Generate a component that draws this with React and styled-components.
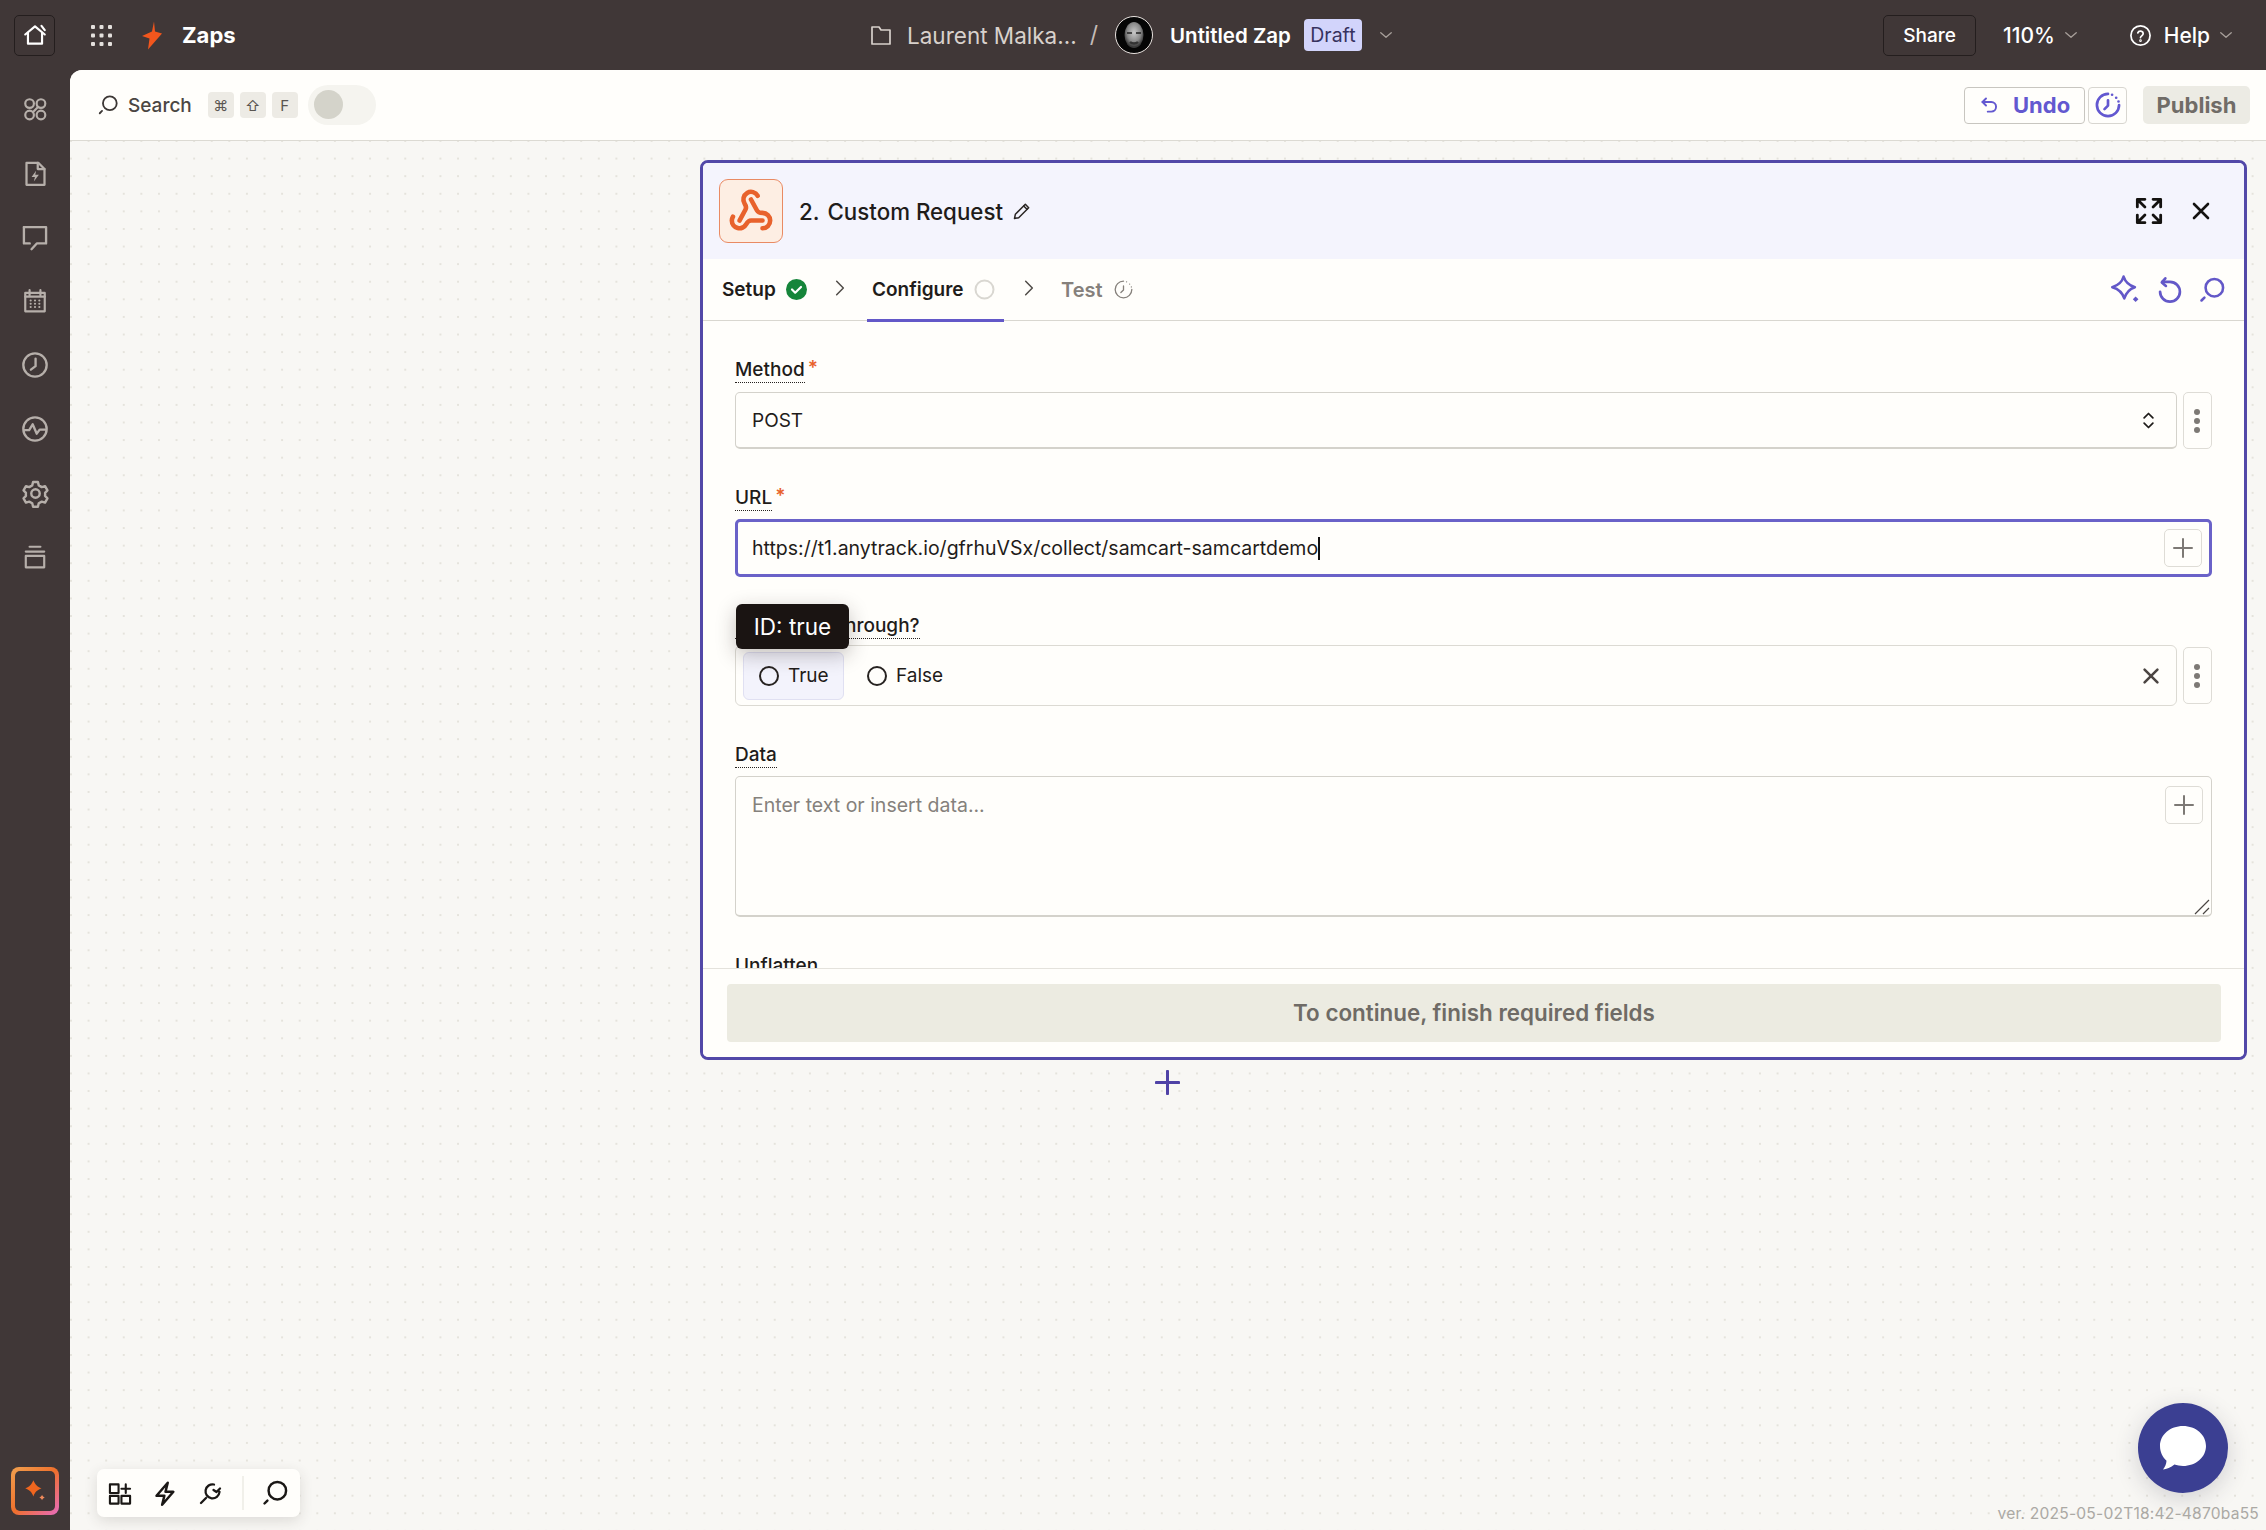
import React from "react";
import styled, { createGlobalStyle } from "styled-components";
import { Webhook } from "lucide-react";

const Global = createGlobalStyle`
  html, body { margin: 0; padding: 0; background: #403737; }
  body { font-family: Inter, "Liberation Sans", sans-serif; color: #1f1c1a; -webkit-font-smoothing: antialiased; }
  * { box-sizing: border-box; }
`;

const Page = styled.div`
  width: 2266px; height: 1530px; overflow: hidden;
  display: grid; grid-template-columns: 70px 1fr; grid-template-rows: 70px 1fr;
  background: #403737;
`;

/* ---------- top bar ---------- */
const TopBar = styled.header`
  grid-column: 1 / 3; display: flex; align-items: center; padding: 0 0 0 14px;
`;
const HomeButton = styled.div`
  width: 41px; height: 41px; border: 1.5px solid #241e1e; border-radius: 5px;
  display: flex; align-items: center; justify-content: center; color: #fff;
`;
const LeftGroup = styled.div`
  display: flex; align-items: center; width: 855px;
`;
const GridSlot = styled.div`
  margin-left: 36px; display: flex; color: #e4e0dd;
`;
const BoltSlot = styled.div`
  margin-left: 30px; display: flex;
`;
const Product = styled.span`
  margin-left: 20px; font-size: 22px; font-weight: 700; color: #fff;
`;
const CenterGroup = styled.div`
  display: flex; align-items: center; flex: 1; color: #d8d1cc;
`;
const FolderName = styled.span`
  margin-left: 14px; font-size: 22.5px; color: #d8d1cc; white-space: nowrap;
`;
const Slash = styled.span`
  margin-left: 13px; font-size: 23px; color: #c4bcb7;
`;
const Avatar = styled.div`
  margin-left: 17px; width: 38px; height: 38px; flex: none; display: flex;
`;
const ZapName = styled.span`
  margin-left: 17px; font-size: 20.5px; font-weight: 600; color: #fff; white-space: nowrap;
`;
const DraftBadge = styled.span`
  margin-left: 13px; width: 58px; height: 32px; border-radius: 4px; background: #d2d4fb;
  color: #37325e; font-size: 19.5px; font-weight: 400; display: flex; align-items: center; justify-content: center;
`;
const Chevron = styled.span`
  display: flex; color: ${p => p.$color || "#a69e99"}; margin-left: ${p => p.$ml || 0}px;
`;
const RightGroup = styled.div`
  display: flex; align-items: center; width: 383px; flex: none; color: #fff;
`;
const ShareButton = styled.div`
  width: 93px; height: 41px; border: 1.5px solid #241e1e; border-radius: 5px; font-size: 19px; font-weight: 500;
  display: flex; align-items: center; justify-content: center;
`;
const ZoomValue = styled.span`
  margin-left: 27px; font-size: 21px; font-weight: 500;
`;
const HelpSlot = styled.span`
  margin-left: 49px; display: flex;
`;
const HelpText = styled.span`
  margin-left: 12px; font-size: 21px; font-weight: 500;
`;

/* ---------- side rail ---------- */
const Rail = styled.nav`
  display: flex; flex-direction: column; align-items: center; padding-top: 21px;
  gap: 28px; color: #b6afaa; position: relative;
`;
const RailIcon = styled.div`
  width: 36px; height: 36px; display: flex; align-items: center; justify-content: center;
`;
const AiButton = styled.div`
  position: absolute; left: 11px; bottom: 15px; width: 48px; height: 48px; border-radius: 8px; padding: 4px;
  background: linear-gradient(135deg, #f0a14f 0%, #ee6f2c 50%, #e86cc0 100%);
  display: flex;
`;
const AiInner = styled.div`
  flex: 1; border-radius: 5px; background: #403737; display: flex; align-items: center; justify-content: center;
`;

/* ---------- canvas ---------- */
const Main = styled.main`
  display: flex; flex-direction: column; background: #f8f7f4; border-top-left-radius: 12px; overflow: hidden; position: relative;
`;
const Toolbar = styled.div`
  height: 71px; flex: none; background: #fffefb; border-bottom: 1.5px solid #dcdad3; display: flex; align-items: center;
  padding-left: 27px; color: #3c3735;
`;
const SearchLabel = styled.span`
  margin-left: 9px; font-size: 19px; font-weight: 500; color: #4b4643;
`;
const Keys = styled.div`
  display: flex; gap: 6px; margin-left: 16px;
`;
const Key = styled.kbd`
  width: 26px; height: 26px; border-radius: 4px; background: #edebe5; color: #5a5551;
  font-family: Inter, "DejaVu Sans", sans-serif; font-size: 15px; display: flex; align-items: center; justify-content: center;
`;
const Toggle = styled.div`
  margin-left: 10px; width: 68px; height: 40px; border-radius: 20px; background: #f5f4ef; padding: 5px 6px; display: flex;
`;
const ToggleKnob = styled.div`
  width: 29px; height: 29px; border-radius: 50%; background: #d4d3ca;
`;
const ToolbarActions = styled.div`
  margin-left: auto; display: flex; align-items: center; padding-right: 16px;
`;
const UndoButton = styled.div`
  width: 121px; height: 37px; border: 1.5px solid #c8c6c0; border-radius: 4px; display: flex; align-items: center;
  padding-left: 14px; gap: 13px; color: #6358d0; font-size: 22px; font-weight: 700; background: #fffefb;
`;
const TimerButton = styled.div`
  margin-left: 3px; width: 39px; height: 37px; border: 1.5px solid #d8d6d0; border-radius: 4px; display: flex;
  align-items: center; justify-content: center; color: #6358d0;
`;
const PublishButton = styled.div`
  margin-left: 16px; width: 107px; height: 38px; border-radius: 5px; background: #ecebe4; color: #706c67;
  font-size: 22px; font-weight: 700; display: flex; align-items: center; justify-content: center;
`;
const Canvas = styled.div`
  flex: 1; position: relative; padding: 19px 0 0 630px;
  background-color: #f8f7f4;
  background-image: radial-gradient(circle at 1px 1px, #e5e3dc 0 1px, transparent 1.5px);
  background-size: 17.6px 17.6px;
  background-position: 0 -1px;
`;

/* ---------- panel ---------- */
const Panel = styled.section`
  width: 1547px; height: 900px; border: 3px solid #5248a8; border-radius: 8px; background: #fffefb;
  display: flex; flex-direction: column; overflow: hidden;
`;
const PanelHeader = styled.div`
  height: 96px; flex: none; background: #f4f4fd; display: flex; align-items: center; padding: 0 31px 0 16px;
`;
const AppIcon = styled.div`
  width: 64px; height: 64px; border: 1.5px solid #e98a63; border-radius: 9px; background: #fdeee3; color: #e8622c;
  display: flex; align-items: center; justify-content: center;
`;
const PanelTitle = styled.h2`
  margin: 0 0 0 16px; font-size: 22.3px; font-weight: 500; color: #1f1c1a; display: flex; gap: 8px; white-space: nowrap;
`;
const EditSlot = styled.span`
  margin-left: 9px; display: flex; color: #2a2624;
`;
const HeaderActions = styled.div`
  margin-left: auto; display: flex; align-items: center; gap: 26px; color: #141210;
`;
const Tabs = styled.div`
  height: 62px; flex: none; display: flex; align-items: stretch; border-bottom: 1.5px solid #d9d7d0; padding: 0 0 0 19px; font-size: 19px;
`;
const Tab = styled.div`
  position: relative; display: flex; align-items: center; gap: 10px; width: ${p => p.$w}px; flex: none;
  padding-left: ${p => p.$pl || 0}px; font-weight: 600; font-size: ${p => p.$muted ? 20 : 19}px; color: ${p => p.$muted ? "#85807b" : "#1f1c1a"};
  ${p => p.$active && `&::after { content: ""; position: absolute; left: 0; right: 0; bottom: -1.5px; height: 3px; background: #6358c8; }`}
`;
const TabChevron = styled.div`
  width: ${p => p.$w}px; flex: none; display: flex; align-items: center; padding-left: ${p => p.$pl || 0}px; color: #4f4b47; padding-bottom: 4px;
`;
const TabTools = styled.div`
  margin-left: auto; display: flex; align-items: center; gap: 14px; color: #6358c8; padding-right: 18px;
`;
const PanelBody = styled.div`
  flex: 1; min-height: 0; overflow: hidden; padding: 37px 32px 0; display: flex; flex-direction: column; gap: 37px;
`;
const Field = styled.div`
  display: flex; flex-direction: column; flex: none;
`;
const LabelRow = styled.div`
  display: flex; gap: 3px; height: 25px; margin-bottom: ${p => p.$mb ?? 9}px;
`;
const Label = styled.label`
  font-size: 19px; font-weight: 500; line-height: 24px; height: 25px; border-bottom: 1.5px dotted #26221f; color: #1f1c1a;
`;
const Required = styled.span`
  color: #e8622c; font-size: 19px; line-height: 20px; font-weight: 600;
`;
const Row = styled.div`
  display: flex; gap: 6px; align-items: ${p => p.$align || "stretch"};
`;
const Select = styled.div`
  flex: 1; height: 57px; border: 1.5px solid #d4d2cb; border-bottom-width: 2px; border-radius: 5px; display: flex; align-items: center; justify-content: space-between;
  padding: 0 17px 0 16px; font-size: 19px; color: #1f1c1a; background: #fffefb;
`;
const Kebab = styled.div`
  width: 29px; height: ${p => p.$h}px; flex: none; border: 1.5px solid #dedcd6; border-radius: 5px; display: flex; align-items: center; justify-content: center; color: #7d7975; padding-right: 2px;
`;
const UrlInput = styled.div`
  height: 58px; border: 3px solid #6a62c8; border-radius: 5px; display: flex; align-items: center; padding: 0 7px 0 14px;
  font-size: 19.5px; justify-content: space-between; background: #fffefb;
`;
const UrlText = styled.span`
  display: flex; align-items: center; white-space: nowrap;
`;
const Caret = styled.i`
  display: inline-block; width: 1.5px; height: 23px; background: #111; margin-left: 0;
`;
const PlusButton = styled.div`
  width: 38px; height: 38px; flex: none; border: 1.5px solid #dedcd6; border-radius: 5px; display: flex; align-items: center; justify-content: center; color: #7d7975;
`;
const RadioBox = styled.div`
  flex: 1; height: 61px; border: 1.5px solid #dcdad3; border-radius: 6px; display: flex; align-items: center; padding: 0 14px 0 7px; font-size: 19px;
`;
const RadioOption = styled.div`
  height: 48px; width: ${p => p.$w}px; display: flex; align-items: center; gap: 9px; padding-left: 16px; border-radius: 6px;
  ${p => p.$hover && `background: #f3f3fc; border: 1.5px solid #e0e0f2; padding-left: 15px; margin-right: 7px;`}
`;
const RadioDot = styled.span`
  width: 20px; height: 20px; flex: none; border: 2px solid #272321; border-radius: 50%;
`;
const ClearSlot = styled.span`
  margin-left: auto; display: flex; color: #4b4542;
`;
const TextArea = styled.div`
  position: relative; height: 141px; border: 1.5px solid #d4d2cb; border-bottom-width: 2px; border-radius: 5px; display: flex; justify-content: space-between;
  padding: 9px 8px 0 16px; font-size: 19.5px; color: #85817c;
`;
const Placeholder = styled.span`
  line-height: 38px;
`;
const ResizeGrip = styled.span`
  position: absolute; right: 1px; bottom: 0; display: flex; color: #4a4643;
`;
const Tooltip = styled.div`
  position: absolute; left: 1px; top: -10px; width: 113px; height: 45px; border-radius: 6px; background: #1a1412; color: #fff;
  font-size: 22.5px; display: flex; align-items: center; justify-content: center; box-shadow: 0 6px 20px rgba(40,30,30,.28);
  z-index: 2;
`;
const TooltipAnchor = styled.div`
  position: relative;
`;
const PanelFooter = styled.div`
  flex: none; height: 89px; border-top: 1.5px solid #e4e2dc; padding: 15px 23px 0 24px; background: #fffefb;
`;
const ContinueButton = styled.div`
  height: 58px; border-radius: 4px; background: #ecebe1; color: #6f6b66; font-size: 22.4px; font-weight: 600;
  display: flex; align-items: center; justify-content: center; padding-bottom: 1px;
`;
const AddStep = styled.div`
  padding: 10px 0 0 455px; display: flex; color: #4f42a6;
`;

/* ---------- floaters ---------- */
const FloatBar = styled.div`
  position: absolute; left: 27px; bottom: 13px; width: 203px; height: 48px; border-radius: 7px; background: #fffefb;
  box-shadow: 0 4px 14px rgba(60,50,40,.14); display: flex; align-items: center; padding-left: 11px; color: #1a1715;
`;
const FloatItem = styled.div`
  width: ${p => p.$w || 45}px; height: 48px; display: flex; align-items: center; justify-content: center; flex: none;
`;
const FloatDivider = styled.div`
  width: 1.5px; height: 34px; background: #f1f0ea; margin: 0 9px 0 20px; flex: none;
`;
const ChatButton = styled.div`
  position: absolute; right: 38px; bottom: 37px; width: 90px; height: 90px; border-radius: 50%; background: #3b3f92;
  box-shadow: 0 6px 24px rgba(40,40,60,.18); display: flex; align-items: center; justify-content: center;
`;
const Version = styled.div`
  position: absolute; right: 7px; bottom: 7px; font-size: 15.6px; color: #aba9a4; letter-spacing: .2px; white-space: nowrap;
`;

/* ---------- icons ---------- */
const Ico = ({ s = 24, w = 2, children, fill = "none", vb = "0 0 24 24" }) => (
  <svg width={s} height={s} viewBox={vb} fill={fill} stroke={fill === "none" ? "currentColor" : "none"} strokeWidth={w} strokeLinecap="round" strokeLinejoin="round">
    {children}
  </svg>
);

const HomeIcon = () => <Ico s={26} w={2}><path d="M3 11.5 12 4l9 7.5" /><path d="M5.5 10v10h13V10" /><path d="M18 3.5l3 4" /></Ico>;
const AppsIcon = () => (
  <Ico s={21} fill="currentColor" vb="0 0 21 21">
    {[2, 10.5, 19].flatMap(y => [2, 10.5, 19].map(x => <rect key={`${x}-${y}`} x={x - 2} y={y - 2} width="4" height="4" rx="1" />))}
  </Ico>
);
const ZapBolt = () => <svg width="20" height="29" viewBox="0 0 20 28"><path d="M12 0 10 10 0 14.500l7.500 2.500L6 28 20 12 13 10Z" fill="#f2561d" /></svg>;
const ChevronDown = ({ s = 18 }) => <Ico s={s} w={1.8}><path d="M5 9l7 6 7-6" /></Ico>;
const FolderIcon = () => <Ico s={24} w={1.7}><path d="M3 4h7l2 3h9v14H3Z" /></Ico>;
const AvatarPic = () => (
  <svg width="38" height="38" viewBox="0 0 38 38">
    <defs>
      <radialGradient id="fc" cx="50%" cy="40%" r="55%"><stop offset="0" stopColor="#c9c9c9" /><stop offset=".65" stopColor="#8a8a8a" /><stop offset="1" stopColor="#3a3a3a" /></radialGradient>
    </defs>
    <circle cx="19" cy="19" r="18.5" fill="#050505" stroke="#e9e3e0" strokeWidth="1" />
    <ellipse cx="19" cy="19" rx="9.500" ry="13" fill="url(#fc)" />
    <path d="M12 17h5M21 17h5" stroke="#222" strokeWidth="1.600" />
    <path d="M15 26c2 2 6 2 8 0" stroke="#333" strokeWidth="2.400" fill="none" />
  </svg>
);
const HelpIcon = () => <Ico s={23} w={1.8}><circle cx="12" cy="12" r="10" /><path d="M9.2 9.3a2.9 2.9 0 0 1 5.6.9c0 1.9-2.8 2.3-2.8 3.9" /><circle cx="12" cy="17.4" r=".5" /></Ico>;
const SearchIcon = ({ s = 22, w = 2 }) => <Ico s={s} w={w}><circle cx="14" cy="10" r="7.5" /><path d="M3 21l2.5-2.5" /></Ico>;
const UndoArrow = () => <Ico s={21} w={2.2}><path d="M8 4 4 8l4 4" /><path d="M4 8h10a5.5 5.5 0 0 1 0 11h-4" /></Ico>;
const TimerIcon = ({ s = 28, w = 2.3 }) => (
  <Ico s={s} w={w}>
    <path d="M12 2.5A9.5 9.5 0 1 0 21.5 12" />
    <path d="M12 8v4.5l-3 3" />
    <path d="M15.5 3.2h.01M19 5.8h.01M21 9h.01" />
  </Ico>
);
const RailCircles = () => <Ico s={26} w={2}><circle cx="7" cy="7" r="4" /><circle cx="17.5" cy="7" r="4" /><circle cx="7" cy="17.5" r="4" /><circle cx="17.5" cy="17.5" r="4" /><path d="M15 10 10 15" /></Ico>;
const RailDoc = () => <Ico s={27} w={2}><path d="M4 2.5h10.5l5.5 5.5v14H4Z" /><path d="M14 2.5V8h6" /><path d="M12.5 9.5 8.5 15h3l-1 4 4.5-6h-3.2Z" fill="currentColor" stroke="none" /></Ico>;
const RailChat = () => <Ico s={28} w={2}><path d="M2.5 3.5h19v14h-8L9 22.5" /><path d="M7.5 17.5h-5v-14" /></Ico>;
const RailCal = () => (
  <Ico s={26} w={2}>
    <path d="M3 4.5h18v17H3Z" /><path d="M7 2v4.5M17 2v4.5M3 8h18" />
    <path d="M8 11.5h.01M12 11.5h.01M16 11.5h.01M8 14.5h.01M12 14.5h.01M16 14.5h.01M8 17.5h.01M12 17.5h.01M16 17.5h.01" />
  </Ico>
);
const RailClock = () => <Ico s={28} w={2}><circle cx="12" cy="12" r="10" /><path d="M12.5 6.5V13l-4 3" /></Ico>;
const RailPulse = () => <Ico s={28} w={2}><circle cx="12" cy="12" r="10" /><path d="M3 13h4l3-5 3.5 8 2.5-3.5h5" /></Ico>;
const RailGear = () => (
  <Ico s={29} w={2}>
    <circle cx="12" cy="12" r="3.5" />
    <path d="M10 2.5h4l.7 2.8 2.5 1.4 2.7-.8 2 3.5-2 2 .1 1.2-.1 1.4 2 2-2 3.5-2.7-.8-2.5 1.4-.7 2.8h-4l-.7-2.8-2.5-1.4-2.7.8-2-3.5 2-2-.1-1.4.1-1.2-2-2 2-3.5 2.7.8 2.5-1.4Z" />
  </Ico>
);
const RailStack = () => <Ico s={26} w={2}><path d="M7 2.5h10M3.5 7h17" /><path d="M3.5 11h17v10.5h-17Z" /></Ico>;
const SparkFill = () => (
  <svg width="26" height="26" viewBox="0 0 24 24">
    <path d="M10.500 2c1.600 4 3.500 6 7.500 7.500-4 1.600-5.900 3.500-7.500 7.500-1.600-4-3.500-5.900-7.500-7.500 4-1.500 5.900-3.500 7.500-7.500Z" fill="#f0661f" />
    <path d="M18.500 15.500c.5 1.300 1.300 2 2.500 2.500-1.200.5-2 1.300-2.500 2.500-.5-1.200-1.300-2-2.500-2.500 1.200-.5 2-1.200 2.500-2.500Z" fill="#ef8a5b" />
  </svg>
);
const Pencil = () => <Ico s={20} w={1.8}><path d="M3 21l1-5L16 4l4 4L8 20Z" /><path d="M14 6l4 4" /></Ico>;
const ExpandIcon = () => (
  <Ico s={28} w={2.4}>
    <path d="M2 8.500V2h6.500M2.500 2.500l6 6M15.500 2H22v6.500M21.500 2.500l-6 6M2 15.500V22h6.500M2.500 21.500l6-6M22 15.500V22h-6.500M21.500 21.500l-6-6" />
  </Ico>
);
const CloseIcon = ({ s = 24, w = 2.6 }) => <Ico s={s} w={w}><path d="M5 5l14 14M19 5 5 19" /></Ico>;
const CheckBadge = () => (
  <svg width="21" height="21" viewBox="0 0 21 21"><circle cx="10.500" cy="10.500" r="10.500" fill="#15853a" /><path d="M6 10.500l3.200 3.200L15 8" stroke="#fff" strokeWidth="2.200" fill="none" strokeLinecap="round" strokeLinejoin="round" /></svg>
);
const Ring = () => <svg width="21" height="21" viewBox="0 0 21 21"><circle cx="10.500" cy="10.500" r="9" fill="none" stroke="#d9d7d1" strokeWidth="2" /></svg>;
const ChevronRight = () => <Ico s={20} w={1.8}><path d="M8 4l8 8-8 8" /></Ico>;
const SparkOutline = () => (
  <Ico s={34} w={1.8} vb="0 0 24 24">
    <path d="M11 2.500c1.200 3.700 3.800 6.200 8 7.500-4 1.300-6.200 3.500-7.500 8-1.300-4.500-4-6.700-8.500-8 4.500-1.300 7-3.800 8-7.500Z" />
    <path d="M19.500 16.500l2 2-2 2-2-2Z" fill="currentColor" stroke="none" />
  </Ico>
);
const RedoIcon = () => <Ico s={28} w={2.300}><path d="M8 2 5 5.500 8.500 8.500" /><path d="M5.500 5.500H12a8.500 8.500 0 1 1-8.500 8.500" transform="translate(0 -.500)" /></Ico>;
const UpDown = () => <Ico s={21} w={2}><path d="M7 9l5-5 5 5M7 15l5 5 5-5" /></Ico>;
const Dots = () => (
  <svg width="6" height="24" viewBox="0 0 6 24" fill="currentColor"><circle cx="3" cy="3" r="3" /><circle cx="3" cy="12" r="3" /><circle cx="3" cy="21" r="3" /></svg>
);
const Plus = ({ s = 20, w = 2 }) => <Ico s={s} w={w} vb="0 0 20 20"><path d="M10 1v18M1 10h18" /></Ico>;
const Grip = () => (
  <svg width="16" height="16" viewBox="0 0 16 16" stroke="currentColor" strokeWidth="1.200"><path d="M1 15 15 1M9 15l6-6" /></svg>
);
const AddWidget = () => (
  <Ico s={25} w={2.200} vb="0 0 25 25">
    <path d="M2 3h9v9H2ZM2 15h9v8H2ZM14 15h9v8h-9ZM14 7.500h9M18.500 3v9" />
  </Ico>
);
const BoltOutline = () => <Ico s={27} w={2.200}><path d="M14 2.500 4 14h7l-2 8 10-11.500h-7Z" /></Ico>;
const WrenchSearch = () => (
  <Ico s={32} w={2.300}>
    <path d="M3 22l5-5" />
    <path d="M21.500 11a7 7 0 1 1-5.500-7.500M15.500 9l3 2 3.500-3.500" />
  </Ico>
);
const ChatBubble = () => (
  <svg width="50" height="48" viewBox="0 0 50 48"><path d="M25 2c12.700 0 23 8.700 23 20s-10.300 20-23 20c-3 0-6-.5-8.600-1.400C13 43.500 8.500 45.500 5 45.500c2-2.500 3.300-5.500 3.500-8.800C4.500 33 2 27.800 2 22 2 10.700 12.300 2 25 2Z" fill="#fff" /></svg>
);

export default function App() {
  return (
    <Page>
      <Global />
      <TopBar>
        <LeftGroup>
          <HomeButton><HomeIcon /></HomeButton>
          <GridSlot><AppsIcon /></GridSlot>
          <BoltSlot><ZapBolt /></BoltSlot>
          <Product>Zaps</Product>
        </LeftGroup>
        <CenterGroup>
          <FolderIcon />
          <FolderName>Laurent Malka...</FolderName>
          <Slash>/</Slash>
          <Avatar><AvatarPic /></Avatar>
          <ZapName>Untitled Zap</ZapName>
          <DraftBadge>Draft</DraftBadge>
          <Chevron $ml={15}><ChevronDown /></Chevron>
        </CenterGroup>
        <RightGroup>
          <ShareButton>Share</ShareButton>
          <ZoomValue>110%</ZoomValue>
          <Chevron $ml={7}><ChevronDown /></Chevron>
          <HelpSlot><HelpIcon /></HelpSlot>
          <HelpText>Help</HelpText>
          <Chevron $ml={7}><ChevronDown /></Chevron>
        </RightGroup>
      </TopBar>

      <Rail>
        <RailIcon><RailCircles /></RailIcon>
        <RailIcon><RailDoc /></RailIcon>
        <RailIcon><RailChat /></RailIcon>
        <RailIcon><RailCal /></RailIcon>
        <RailIcon><RailClock /></RailIcon>
        <RailIcon><RailPulse /></RailIcon>
        <RailIcon><RailGear /></RailIcon>
        <RailIcon><RailStack /></RailIcon>
        <AiButton><AiInner><SparkFill /></AiInner></AiButton>
      </Rail>

      <Main>
        <Toolbar>
          <SearchIcon />
          <SearchLabel>Search</SearchLabel>
          <Keys><Key>⌘</Key><Key>⇧</Key><Key>F</Key></Keys>
          <Toggle><ToggleKnob /></Toggle>
          <ToolbarActions>
            <UndoButton><UndoArrow />Undo</UndoButton>
            <TimerButton><TimerIcon /></TimerButton>
            <PublishButton>Publish</PublishButton>
          </ToolbarActions>
        </Toolbar>
        <Canvas>
          <Panel>
            <PanelHeader>
              <AppIcon><Webhook size={46} strokeWidth={2.4} /></AppIcon>
              <PanelTitle><span>2.</span><span>Custom Request</span></PanelTitle>
              <EditSlot><Pencil /></EditSlot>
              <HeaderActions>
                <ExpandIcon />
                <CloseIcon />
              </HeaderActions>
            </PanelHeader>
            <Tabs>
              <Tab $w={108}>Setup <CheckBadge /></Tab>
              <TabChevron $w={37}><ChevronRight /></TabChevron>
              <Tab $w={137} $active $pl={5}>Configure <Ring /></Tab>
              <TabChevron $w={57} $pl={15}><ChevronRight /></TabChevron>
              <Tab $w={100} $muted>Test <TimerIcon s={21} w={1.5} /></Tab>
              <TabTools>
                <SparkOutline />
                <RedoIcon />
                <SearchIcon s={28} w={2.200} />
              </TabTools>
            </Tabs>
            <PanelBody>
              <Field>
                <LabelRow><Label>Method</Label><Required>*</Required></LabelRow>
                <Row>
                  <Select>POST<UpDown /></Select>
                  <Kebab $h={57}><Dots /></Kebab>
                </Row>
              </Field>
              <Field>
                <LabelRow $mb={8}><Label>URL</Label><Required>*</Required></LabelRow>
                <UrlInput>
                  <UrlText>https://t1.anytrack.io/gfrhuVSx/collect/samcart-samcartdemo<Caret /></UrlText>
                  <PlusButton><Plus /></PlusButton>
                </UrlInput>
              </Field>
              <Field>
                <TooltipAnchor>
                  <Tooltip>ID: true</Tooltip>
                  <LabelRow $mb={6}><Label>Data Pass-Through?</Label></LabelRow>
                </TooltipAnchor>
                <Row $align="center">
                  <RadioBox>
                    <RadioOption $hover $w={101}><RadioDot />True</RadioOption>
                    <RadioOption $w={110}><RadioDot />False</RadioOption>
                    <ClearSlot><CloseIcon s={22} w={2.800} /></ClearSlot>
                  </RadioBox>
                  <Kebab $h={57}><Dots /></Kebab>
                </Row>
              </Field>
              <Field>
                <LabelRow $mb={8}><Label>Data</Label></LabelRow>
                <TextArea>
                  <Placeholder>Enter text or insert data...</Placeholder>
                  <PlusButton><Plus /></PlusButton>
                  <ResizeGrip><Grip /></ResizeGrip>
                </TextArea>
              </Field>
              <Field>
                <LabelRow><Label>Unflatten</Label></LabelRow>
              </Field>
            </PanelBody>
            <PanelFooter>
              <ContinueButton>To continue, finish required fields</ContinueButton>
            </PanelFooter>
          </Panel>
          <AddStep><Plus s={25} w={2.400} /></AddStep>
          <FloatBar>
            <FloatItem $w={24}><AddWidget /></FloatItem>
            <FloatItem $w={66}><BoltOutline /></FloatItem>
            <FloatItem $w={24}><WrenchSearch /></FloatItem>
            <FloatDivider />
            <FloatItem $w={44}><SearchIcon s={28} w={2.100} /></FloatItem>
          </FloatBar>
          <ChatButton><ChatBubble /></ChatButton>
          <Version>ver. 2025-05-02T18:42-4870ba55</Version>
        </Canvas>
      </Main>
    </Page>
  );
}
